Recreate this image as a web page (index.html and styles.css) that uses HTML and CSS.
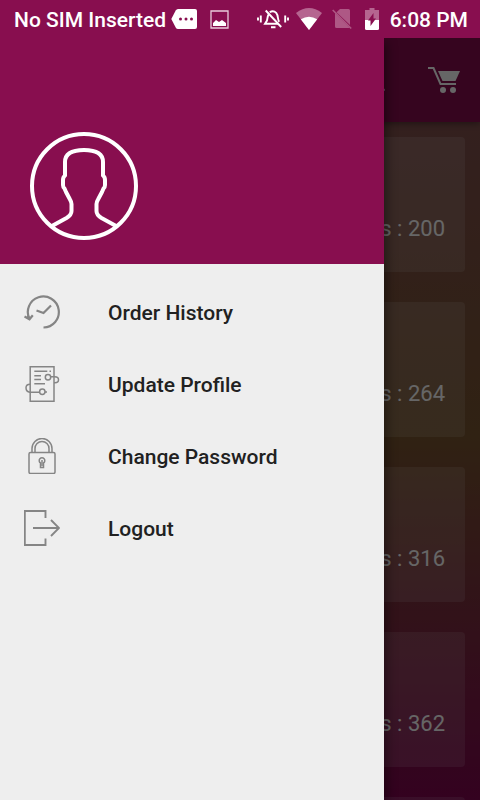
FILE: index.html
```html
<!DOCTYPE html>
<html lang="en">
<head>
    <meta charset="UTF-8">
    <meta name="viewport" content="width=device-width, initial-scale=1.0">
    <title>Orders</title>
    <link rel="stylesheet" href="styles.css">
</head>
<body>
    <div class="screen">
        <header class="status-bar">
            <span class="carrier">No SIM Inserted</span>
            <svg class="icon-message" width="27" height="20" viewBox="0 0 27 20">
                <path fill="#fff" d="M7 0h17q2 0 2 2v16q0 2-2 2H7Q5.500 20 4.700 18.500L.3 10 4.700 1.500Q5.500 0 7 0z"/>
                <g fill="#880e4f"><circle cx="9.500" cy="10" r="1.500"/><circle cx="15" cy="10" r="1.500"/><circle cx="20.500" cy="10" r="1.500"/></g>
            </svg>
            <svg class="icon-image" width="19" height="19" viewBox="0 0 19 19">
                <path fill="none" stroke="#e9cbdb" stroke-width="1.300" d="M1 1h17v17H1z"/>
                <path fill="#fff" d="M3 16v-3l3-3 3 2 3-2 4 3v3z"/>
            </svg>
            <svg class="icon-silent" width="32" height="20" viewBox="0 0 32 20">
                <g fill="none" stroke="#fff" stroke-width="1.900">
                    <path d="M1 8.500v3M3.800 6.500v7M28.200 6.500v7M31 8.500v3"/>
                    <path d="M11.800 5C10.500 7 10.500 9.500 10 11.500L8 14.700h13"/>
                    <path d="M12.700 3.300q3.500-2.500 6.500.5c2.500 3 1 6.500 3 9"/>
                    <path d="M8.700 1.500l15.500 16.500M14 18.300h4.500"/>
                </g>
            </svg>
            <svg class="icon-wifi" width="26" height="22" viewBox="0 0 26 22">
                <path fill="#b56590" d="M13 22L0 5q13-10 26 0z"/>
                <path fill="#fff" d="M13 22L4.800 11.300q8.200-5 16.400 0z"/>
            </svg>
            <svg class="icon-nosim" width="20" height="22" viewBox="0 0 20 22">
                <path fill="#ae5885" d="M8 1h8.500Q18 1 18 2.500V17L4.500 4.200zM3 5L18 20H4.500Q3 20 3 18.500z"/>
                <path stroke="#ae5885" stroke-width="1.600" d="M.7 2l18.500 18.500"/>
            </svg>
            <svg class="icon-battery" width="14" height="22" viewBox="0 0 14 22">
                <path fill="#b56590" d="M4.500 0h5v2H14v10H0V2h4.500z"/>
                <path fill="#fff" d="M0 12h14v8.500q0 1.500-1.500 1.500h-11Q0 22 0 20.500z"/>
                <path fill="#880e4f" d="M8.500 5v5.500H11L5.500 18v-5.500H3z"/>
            </svg>
            <span class="clock">6:08 PM</span>
        </header>

        <div class="page">
            <div class="toolbar">
                <svg width="17" height="24" viewBox="0 0 17 24">
                    <circle cx="6" cy="9" r="5" fill="none" stroke="#fff" stroke-width="2"/>
                    <path stroke="#fff" stroke-width="3" d="M10 15l6 8"/>
                </svg>
                <svg width="32" height="27" viewBox="0 0 32 27">
                    <path fill="none" stroke="#fff" stroke-width="2" d="M0 1h5.500l7 16H28"/>
                    <path fill="#fff" d="M10 4h22l-4.500 10h-13z"/>
                    <circle cx="15" cy="23" r="3" fill="#fff"/>
                    <circle cx="25" cy="23" r="3" fill="#fff"/>
                </svg>
            </div>
            <div class="card-list">
                <div class="card">Rs : 200</div>
                <div class="card">Rs : 264</div>
                <div class="card">Rs : 316</div>
                <div class="card">Rs : 362</div>
                <div class="card"></div>
            </div>
        </div>

        <div class="scrim"></div>

        <div class="drawer-wrap">
            <nav class="drawer">
                <div class="drawer-header">
                    <svg width="108" height="108" viewBox="0 0 108 108" fill="none" stroke="#fff" stroke-width="4">
                        <circle cx="54" cy="54" r="52"/>
                        <path stroke-linejoin="round" d="M21 94.500l15.500-8.500Q41.500 83 41.500 79v-7q0-2-1.500-4.500L36 60l-1.500-3.500Q33 55.500 33 53v-5q0-3 2-4.500V30Q35 18 54 18t19 12v13.500q2 1.500 2 4.500v5q0 2.500-1.500 3.500L72 60l-4 7.500Q66.500 70 66.500 72v7q0 4 5 7L87 94.500"/>
                    </svg>
                </div>
                <ul class="menu">
                    <li>
                        <svg width="36" height="36" viewBox="0 0 36 36">
                            <path d="M5.500 25A15.500 15.500 0 1 1 19.500 33.500"/>
                            <path d="M.5 22.500l5 2.800 3.300-4M5.300 25.500l-1.500-4"/>
                            <path d="M12.500 16.500l7 2.500 7.500-7.500"/>
                        </svg>
                        <span>Order History</span>
                    </li>
                    <li>
                        <svg class="fine" width="36" height="36" viewBox="0 0 36 36">
                            <path d="M6.200.8H30v34.400H6.200z"/>
                            <path d="M10.300 5.300h13M25.500 5.300h1.500M10.300 9.700H17M10.300 13.500H17M10.300 17.700H21"/>
                            <circle cx="24" cy="11.300" r="2.700"/>
                            <path d="M26.700 10.800h4q3.800 0 3.800 3t-3.500 3H30"/>
                            <circle cx="18.300" cy="25.700" r="2.700"/>
                            <path d="M15.600 26.300H6q-4-.5-4-4.500 0-3.500 4.200-3.500M21 26h2"/>
                        </svg>
                        <span>Update Profile</span>
                    </li>
                    <li>
                        <svg class="fine" width="36" height="36" viewBox="0 0 36 36">
                            <rect x="5" y="14.500" width="26" height="21" rx="1.500"/>
                            <path d="M8 14v-3.500a10 10 0 0 1 20 0V14M11 14v-3.500a7 7 0 0 1 14 0V14"/>
                            <path d="M16.500 25a2.800 2.800 0 1 1 3 0v4.500h-3z"/>
                            <path d="M18 22v6"/>
                        </svg>
                        <span>Change Password</span>
                    </li>
                    <li>
                        <svg class="thin" width="36" height="36" viewBox="0 0 36 36">
                            <path d="M21.500 8V1H.8v34h20.700v-6.500"/>
                            <path d="M9 18h26M27 10l8 8-8 8"/>
                        </svg>
                        <span>Logout</span>
                    </li>
                </ul>
            </nav>
        </div>
    </div>
</body>
</html>
```
FILE: styles.css
```css
* {
    box-sizing: border-box;
    margin: 0;
    padding: 0;
}

body {
    font-family: Roboto, sans-serif;
    overflow: hidden;
}

svg {
    display: block;
    flex-shrink: 0;
}

.screen {
    position: relative;
    display: flex;
    flex-direction: column;
    width: 480px;
    height: 800px;
    overflow: hidden;
}

.status-bar {
    display: flex;
    align-items: center;
    height: 38px;
    padding: 0 12px 0 14px;
    background: #880e4f;
    color: #fff;
    font-size: 21px;
    font-weight: 500;
    white-space: nowrap;
}

.carrier {
    width: 157px;
    padding-top: 2px;
}

.icon-image {
    margin-left: 12px;
}

.icon-silent {
    margin-left: 28px;
}

.icon-wifi {
    margin-left: 7px;
}

.icon-nosim {
    margin-left: 10px;
    margin-bottom: 1px;
}

.icon-battery {
    margin-left: 13px;
    margin-bottom: 1px;
}

.clock {
    margin-left: auto;
    padding-top: 2px;
}

.page {
    flex: 1;
    min-height: 0;
    display: flex;
    flex-direction: column;
    overflow: hidden;
    background: linear-gradient(#82504e 84px, #785530 400px, #820550 100%);
}

.toolbar {
    flex-shrink: 0;
    display: flex;
    align-items: center;
    justify-content: flex-end;
    gap: 43px;
    height: 84px;
    padding-right: 20px;
    background: #880e4f;
    box-shadow: 0 2px 6px rgba(0, 0, 0, 0.35);
}

.card-list {
    display: flex;
    flex-direction: column;
    gap: 30px;
    padding: 15px;
}

.card {
    flex-shrink: 0;
    height: 135px;
    padding: 79px 20px 0 0;
    border-radius: 4px;
    background: rgba(255, 255, 255, 0.13);
    color: #fff;
    font-size: 22px;
    line-height: 26px;
    text-align: right;
}

.scrim {
    position: absolute;
    inset: 38px 0 0;
    background: rgba(0, 0, 0, 0.6);
}

/* clips the drawer shadow so it stays below the status bar */
.drawer-wrap {
    position: absolute;
    inset: 38px 0 0;
    overflow: hidden;
}

.drawer {
    width: 384px;
    height: 100%;
    background: #eee;
    box-shadow: 3px 4px 10px rgba(0, 0, 0, 0.4);
}

.drawer-header {
    display: flex;
    align-items: flex-end;
    height: 226px;
    padding: 0 30px 24px;
    background: #880e4f;
}

.menu {
    padding-top: 12px;
    list-style: none;
}

.menu li {
    display: flex;
    align-items: center;
    gap: 48px;
    height: 72px;
    padding-left: 24px;
    color: #212121;
    font-size: 21px;
    font-weight: 500;
}

.menu span {
    padding-top: 2px;
}

.menu svg {
    fill: none;
    stroke: #858585;
    stroke-width: 2.200;
}

.menu svg.fine {
    stroke-width: 1.500;
}

.menu svg.thin {
    stroke-width: 1.900;
}
```
